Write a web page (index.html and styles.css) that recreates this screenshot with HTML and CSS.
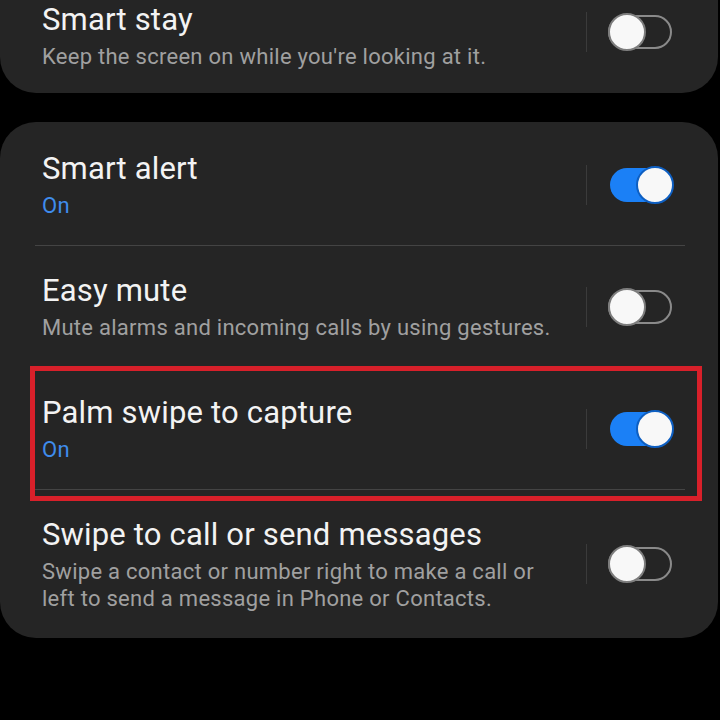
FILE: index.html
```html
<!DOCTYPE html>
<html lang="en">
<head>
<meta charset="utf-8">
<title>Advanced features</title>
<link rel="stylesheet" href="styles.css">
</head>
<body>
<main class="page">
  <section class="card card-top">
    <div class="row row-first">
      <div class="text">
        <div class="title">Smart stay</div>
        <div class="sub">Keep the screen on while you're looking at it.</div>
      </div>
      <span class="vsep"></span>
      <span class="toggle off"><span class="track"></span><span class="thumb"></span></span>
    </div>
  </section>

  <section class="card card-main">
    <div class="row">
      <div class="text">
        <div class="title">Smart alert</div>
        <div class="sub on-label">On</div>
      </div>
      <span class="vsep"></span>
      <span class="toggle on"><span class="track"></span><span class="thumb"></span></span>
    </div>
    <div class="divider"></div>
    <div class="row">
      <div class="text">
        <div class="title">Easy mute</div>
        <div class="sub">Mute alarms and incoming calls by using gestures.</div>
      </div>
      <span class="vsep"></span>
      <span class="toggle off"><span class="track"></span><span class="thumb"></span></span>
    </div>
    <div class="divider"></div>
    <div class="row highlighted">
      <div class="text">
        <div class="title">Palm swipe to capture</div>
        <div class="sub on-label">On</div>
      </div>
      <span class="vsep"></span>
      <span class="toggle on"><span class="track"></span><span class="thumb"></span></span>
      <span class="highlight-box"></span>
    </div>
    <div class="divider"></div>
    <div class="row">
      <div class="text">
        <div class="title">Swipe to call or send messages</div>
        <div class="sub">Swipe a contact or number right to make a call or<br>left to send a message in Phone or Contacts.</div>
      </div>
      <span class="vsep"></span>
      <span class="toggle off"><span class="track"></span><span class="thumb"></span></span>
    </div>
  </section>
</main>
</body>
</html>
```

FILE: styles.css
```css
* { box-sizing: border-box; }

html, body {
  margin: 0;
  padding: 0;
  background: #000;
}

body {
  font-family: Roboto, "Noto Sans", "Liberation Sans", sans-serif;
  color: #f2f2f2;
  width: 720px;
  height: 720px;
  overflow: hidden;
}

.page {
  display: flex;
  flex-direction: column;
  gap: 29px;
}

.card {
  background: #252525;
  margin-right: 2px;
  border-radius: 36px;
}

.card-top {
  border-radius: 0 0 36px 36px;
}

.card-main {
  padding-top: 2px;
}

.row {
  position: relative;
  display: flex;
  align-items: center;
  padding: 26px 44px 26px 42px;
}

.card-top .row-first {
  padding-top: 1px;
  padding-bottom: 23px;
}

.row-first .vsep,
.row-first .toggle {
  margin-bottom: 7px;
}

.text {
  flex: 1;
  min-width: 0;
}

.title {
  font-size: 31px;
  line-height: 38px;
  color: #f3f3f3;
  letter-spacing: 0.18px;
}

.sub {
  margin-top: 4px;
  font-size: 22px;
  line-height: 27px;
  color: #a0a0a0;
  letter-spacing: 0.27px;
}

.on-label {
  color: #3f8cec;
}

.divider {
  height: 1px;
  background: #444;
  margin: 0 33px 0 35px;
}

.vsep {
  width: 1px;
  height: 40px;
  background: #3b3b3b;
  margin-right: 21px;
  flex: none;
}

.toggle {
  position: relative;
  width: 66px;
  height: 38px;
  flex: none;
}

.track {
  position: absolute;
  top: 2px;
  height: 34px;
  border-radius: 17px;
}

.thumb {
  position: absolute;
  top: 0;
  width: 38px;
  height: 38px;
  border-radius: 50%;
  background: #f8f8f8;
}

.toggle.off .track {
  left: 0;
  width: 64px;
  border: 2px solid #8a8a8a;
}

.toggle.off .thumb {
  left: 0;
  border: 2px solid #7d7d7d;
}

.toggle.on .track {
  left: 2px;
  width: 60px;
  background: #1b80f6;
}

.toggle.on .thumb {
  right: 0;
  border: 2px solid #0e5fc2;
}

.highlight-box {
  position: absolute;
  left: 30px;
  top: -2px;
  width: 672px;
  height: 135px;
  border: 5px solid #d8202a;
  pointer-events: none;
}
```
